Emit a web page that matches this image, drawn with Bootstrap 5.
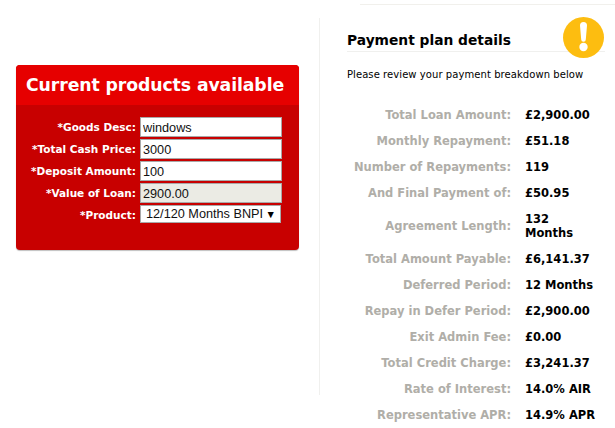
<!DOCTYPE html>
<html lang="en">
<head>
<meta charset="utf-8">
<title>Payment plan</title>
<link href="https://cdn.jsdelivr.net/npm/bootstrap@5.3.0/dist/css/bootstrap.min.css" rel="stylesheet">
<style>
html,body{margin:0;background:#fff;overflow:hidden}
body{width:615px;height:428px;font-family:"DejaVu Sans","Liberation Sans",sans-serif;color:#000}
.top-rule{height:1px;background:#f1f0ec;margin:4px 0 13px 360px}
.page-cols{height:410px}
.left-col{width:319px;flex:none;padding:47px 20px 0 16px}
.right-col{flex:1;border-left:1px solid #f0f0ee;padding:12px 0 0 27px;position:relative;height:377px}
.prod-panel{background:#c80000;border-radius:4px;height:185px;width:283px;box-shadow:0 1px 1px rgba(0,0,0,.25)}
.prod-head{background:#e60000;height:40px;border-radius:4px 4px 0 0;color:#fff;font-weight:700;font-size:17.3px;line-height:40px;padding-left:10px;white-space:nowrap;letter-spacing:-.1px}
.prod-form{padding-top:12px;display:flex;flex-direction:column;gap:2px}
.f-row{display:flex;align-items:center;height:20px}
.f-label{width:120px;flex:none;text-align:right;color:#fff;font-weight:700;font-size:10.5px;line-height:20px;white-space:nowrap}
.f-input{width:142px;height:20px;margin-left:4px;border:1px solid #a9a9a9;background:#fff;font-family:"Liberation Sans",sans-serif;font-size:12.7px;line-height:18px;padding:1px 2px 0;color:#111;border-radius:0;outline:0}
.f-input[readonly]{background:#ebebe4}
.f-select{height:18px;width:141px;margin-left:4px;margin-top:-2px;background:#fff;border:1px solid #a9a9a9;font-family:"Liberation Sans",sans-serif;font-size:12.7px;line-height:16px;padding:0 0 0 5px;color:#111;display:flex;justify-content:space-between;align-items:center;white-space:nowrap;overflow:hidden}
.sel-arrow{font-size:10.5px;line-height:1;margin-right:4px;color:#000}
.plan-title{font-size:13.8px;font-weight:700;line-height:18px;margin:0 10px 0 0;padding:1px 0 2px;border-bottom:1px solid #f0f0ee}
.plan-sub{font-size:10px;line-height:12px;margin:17px 0 0;white-space:nowrap;letter-spacing:.07px}
.warn-icon{position:absolute;left:242.5px;top:-1px;width:41px;height:41px}
.plan-rows{margin:21px 0 0 -27px}
.p-row{display:flex;align-items:center;padding:6px 0;font-size:11.5px;font-weight:700;line-height:14px}
.p-label{width:191px;flex:none;text-align:right;color:#b0aea8;white-space:nowrap}
.p-value{margin-left:14px;color:#000;white-space:nowrap}
</style>
</head>
<body>
<div class="top-rule"></div>
<div class="d-flex page-cols">
  <div class="left-col">
    <div class="prod-panel">
      <div class="prod-head">Current products available</div>
      <div class="prod-form">
        <div class="f-row"><span class="f-label">*Goods Desc:</span><input class="f-input" value="windows"></div>
        <div class="f-row"><span class="f-label">*Total Cash Price:</span><input class="f-input" value="3000"></div>
        <div class="f-row"><span class="f-label">*Deposit Amount:</span><input class="f-input" value="100"></div>
        <div class="f-row"><span class="f-label">*Value of Loan:</span><input class="f-input" value="2900.00" readonly></div>
        <div class="f-row"><span class="f-label">*Product:</span><div class="f-select"><span>12/120 Months BNPI</span><span class="sel-arrow">&#9660;</span></div></div>
      </div>
    </div>
  </div>
  <div class="right-col">
    <h2 class="plan-title">Payment plan details</h2>
    <svg class="warn-icon" viewBox="0 0 41 41" aria-hidden="true"><circle cx="20.5" cy="20.5" r="20.5" fill="#fdbd10"/><path d="M17 8.5a3.5 3.5 0 0 1 7 0l-1.2 14a2.3 2.3 0 0 1-4.6 0z" fill="#fff"/><circle cx="20.5" cy="30" r="4.2" fill="#fff"/></svg>
    <p class="plan-sub">Please review your payment breakdown below</p>
    <div class="plan-rows">
      <div class="p-row"><span class="p-label">Total Loan Amount:</span><span class="p-value">£2,900.00</span></div>
      <div class="p-row"><span class="p-label">Monthly Repayment:</span><span class="p-value">£51.18</span></div>
      <div class="p-row"><span class="p-label">Number of Repayments:</span><span class="p-value">119</span></div>
      <div class="p-row"><span class="p-label">And Final Payment of:</span><span class="p-value">£50.95</span></div>
      <div class="p-row"><span class="p-label">Agreement Length:</span><span class="p-value">132<br>Months</span></div>
      <div class="p-row"><span class="p-label">Total Amount Payable:</span><span class="p-value">£6,141.37</span></div>
      <div class="p-row"><span class="p-label">Deferred Period:</span><span class="p-value">12 Months</span></div>
      <div class="p-row"><span class="p-label">Repay in Defer Period:</span><span class="p-value">£2,900.00</span></div>
      <div class="p-row"><span class="p-label">Exit Admin Fee:</span><span class="p-value">£0.00</span></div>
      <div class="p-row"><span class="p-label">Total Credit Charge:</span><span class="p-value">£3,241.37</span></div>
      <div class="p-row"><span class="p-label">Rate of Interest:</span><span class="p-value">14.0% AIR</span></div>
      <div class="p-row"><span class="p-label">Representative APR:</span><span class="p-value">14.9% APR</span></div>
    </div>
  </div>
</div>
<script src="https://cdn.jsdelivr.net/npm/bootstrap@5.3.0/dist/js/bootstrap.bundle.min.js"></script>
</body>
</html>
